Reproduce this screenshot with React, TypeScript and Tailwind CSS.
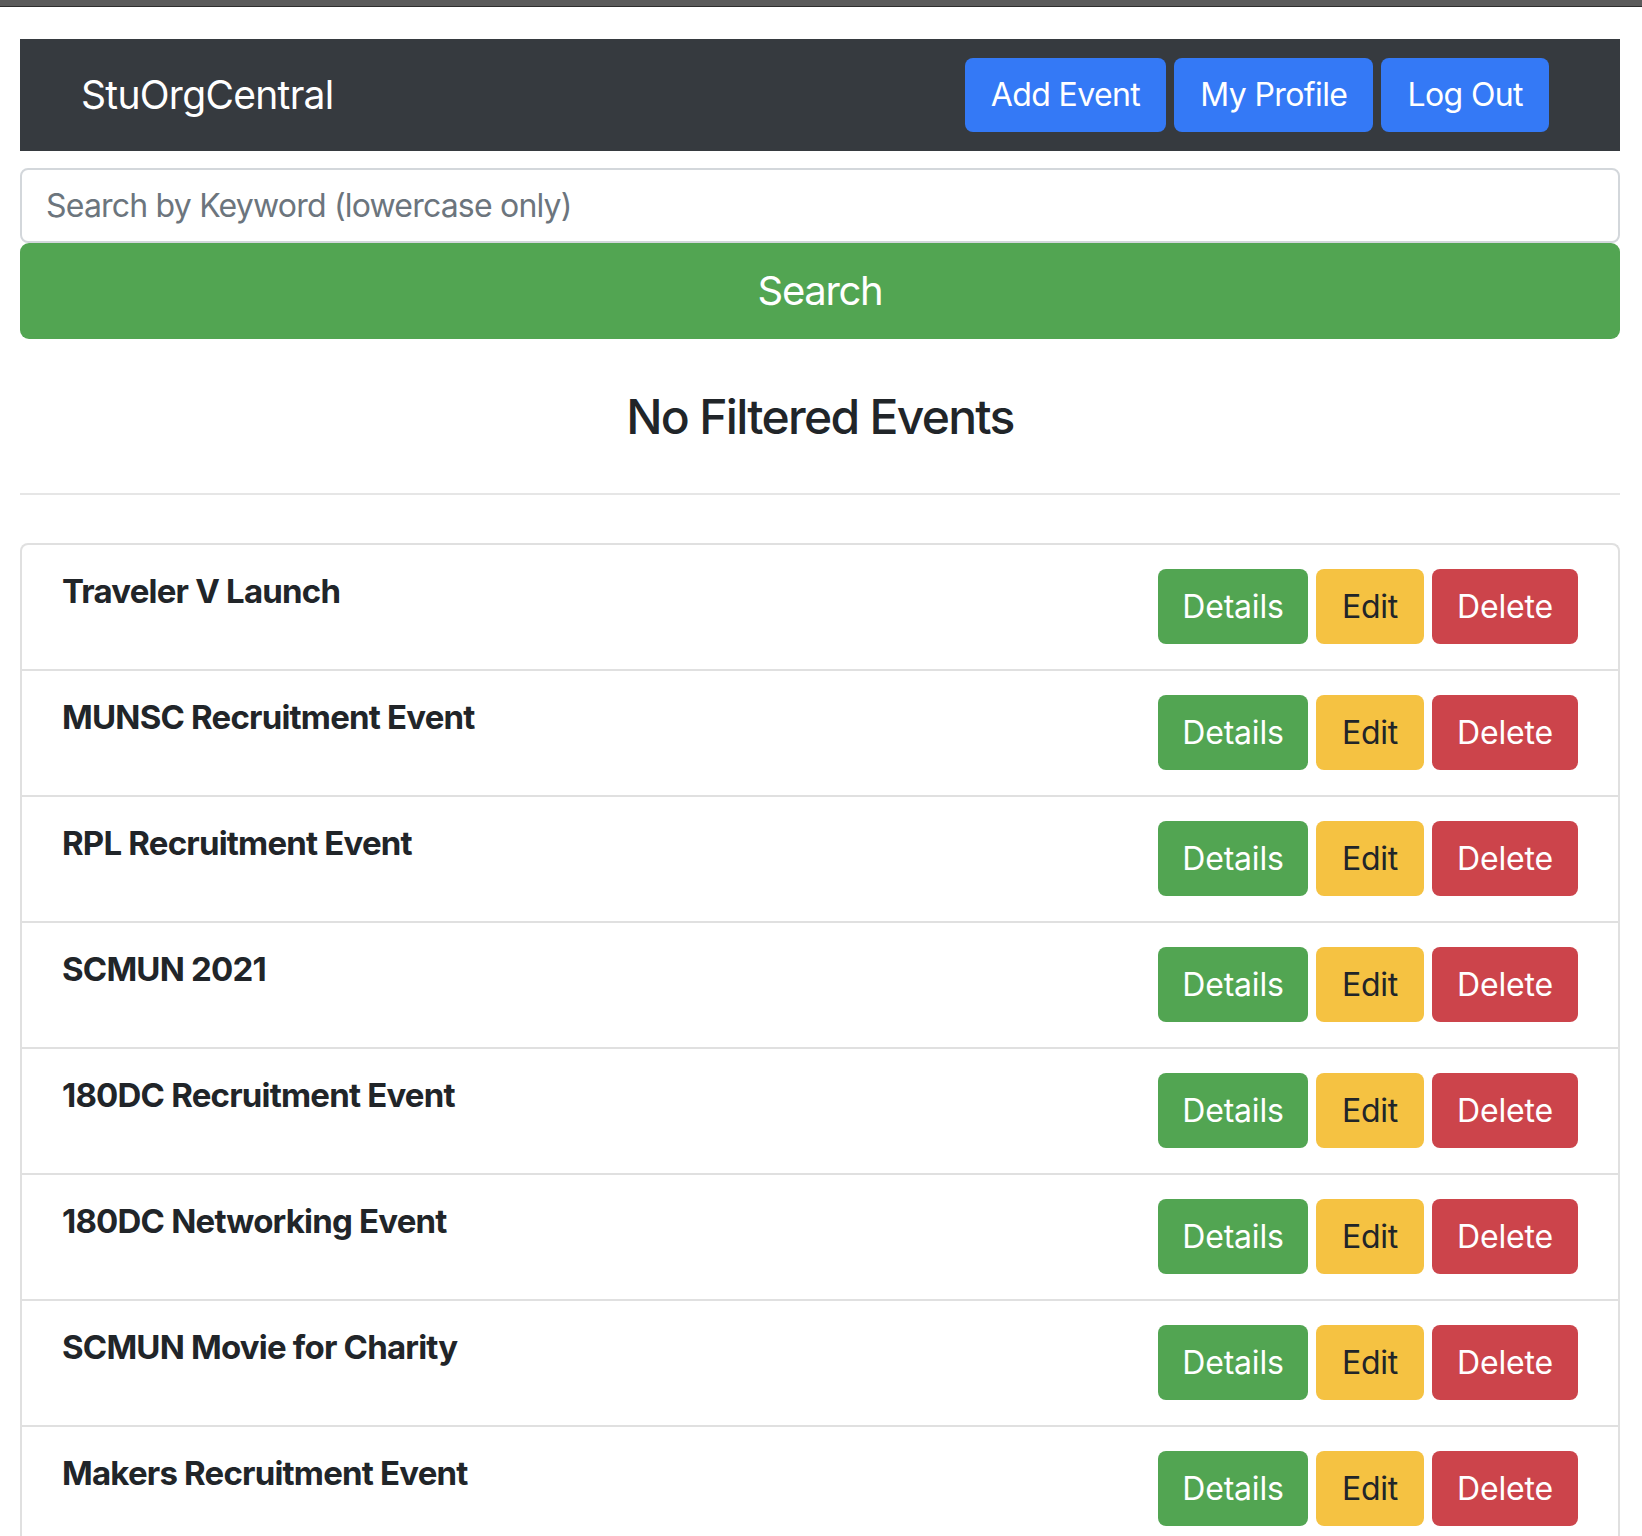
import React from 'react';

const events = [
  'Traveler V Launch',
  'MUNSC Recruitment Event',
  'RPL Recruitment Event',
  'SCMUN 2021',
  '180DC Recruitment Event',
  '180DC Networking Event',
  'SCMUN Movie for Charity',
  'Makers Recruitment Event',
];

const NavButton: React.FC<{ label: string }> = ({ label }) => (
  <button className="h-[74px] px-[26px] rounded-[8px] bg-[#3479f6] text-white text-[32px] leading-[48px] tracking-[-0.6px]">
    {label}
  </button>
);

const EventRow: React.FC<{ title: string; first: boolean }> = ({ title, first }) => (
  <li
    className={`flex items-start justify-between border-x-2 border-t-2 border-[#e0e0e0] pl-[40px] pr-[40px] pt-[24px] pb-[25px] ${
      first ? 'rounded-t-[8px]' : ''
    }`}
  >
    <h5 className="mt-[2px] text-[33px] leading-[40px] font-bold tracking-[-0.8px] text-[#212529]">{title}</h5>
    <div className="flex gap-2 tracking-[-0.2px]">
      <button className="h-[75px] w-[150px] rounded-[8px] bg-[#52a552] text-white text-[32px]">Details</button>
      <button className="h-[75px] w-[108px] rounded-[8px] bg-[#f5c242] text-[#212529] text-[32px]">Edit</button>
      <button className="h-[75px] w-[146px] rounded-[8px] bg-[#cc444b] text-white text-[32px]">Delete</button>
    </div>
  </li>
);

export default function App() {
  return (
    <div className="h-screen overflow-hidden bg-white font-['Inter',sans-serif] text-[#212529]">
      <div className="h-[7px] bg-[#5b5b5b] border-b border-[#2e2e2e]" />
      <div className="pl-[20px] pr-[22px]">
        {/* Navbar */}
        <nav className="mt-[32px] h-[112px] bg-[#363a3f] flex items-center justify-between pl-[61px] pr-[71px]">
          <span className="text-white text-[39px] leading-[48px] tracking-[-0.7px]">StuOrgCentral</span>
          <div className="flex gap-2">
            <NavButton label="Add Event" />
            <NavButton label="My Profile" />
            <NavButton label="Log Out" />
          </div>
        </nav>

        {/* Search */}
        <div className="mt-[17px]">
          <input
            className="w-full h-[75px] border-2 border-[#d3d7db] rounded-[8px] px-[24px] text-[32px] tracking-[-0.8px] placeholder:text-[#6c757d] outline-none"
            placeholder="Search by Keyword (lowercase only)"
          />
          <button className="w-full h-[96px] rounded-[9px] bg-[#52a552] text-white text-[40px] tracking-[-1.3px]">
            Search
          </button>
        </div>

        <h4 className="mt-[49px] text-center text-[48px] leading-[58px] font-medium tracking-[-1.7px]">
          No Filtered Events
        </h4>
        <hr className="mt-[47px] border-0 h-[2px] bg-[#e6e6e6]" />

        {/* Event list */}
        <ul className="mt-[48px]">
          {events.map((e, i) => (
            <EventRow key={e} title={e} first={i === 0} />
          ))}
        </ul>
      </div>
    </div>
  );
}
